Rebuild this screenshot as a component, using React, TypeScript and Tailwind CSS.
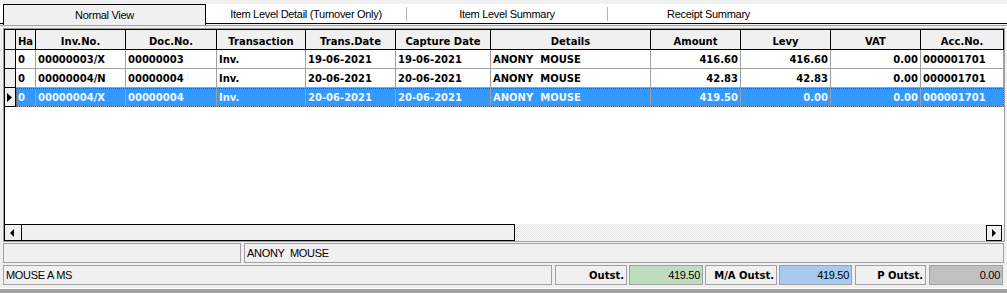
import React from 'react';

type Col = { label: string; w: string; right?: boolean };

const columns: Col[] = [
  { label: 'Ha', w: 'w-[20px]' },
  { label: 'Inv.No.', w: 'w-[90px]' },
  { label: 'Doc.No.', w: 'w-[91px]' },
  { label: 'Transaction', w: 'w-[89px]' },
  { label: 'Trans.Date', w: 'w-[90px]' },
  { label: 'Capture Date', w: 'w-[95px]' },
  { label: 'Details', w: 'w-[160px]' },
  { label: 'Amount', w: 'w-[90px]', right: true },
  { label: 'Levy', w: 'w-[90px]', right: true },
  { label: 'VAT', w: 'w-[90px]', right: true },
  { label: 'Acc.No.', w: 'w-[83px]' },
];

const rows: string[][] = [
  ['0', '00000003/X', '00000003', 'Inv.', '19-06-2021', '19-06-2021', 'ANONY  MOUSE', '416.60', '416.60', '0.00', '000001701'],
  ['0', '00000004/N', '00000004', 'Inv.', '20-06-2021', '20-06-2021', 'ANONY  MOUSE', '42.83', '42.83', '0.00', '000001701'],
  ['0', '00000004/X', '00000004', 'Inv.', '20-06-2021', '20-06-2021', 'ANONY  MOUSE', '419.50', '0.00', '0.00', '000001701'],
];

const Tab: React.FC<{ label: string; sep?: boolean }> = ({ label, sep }) => (
  <div className="w-[201px] flex items-center">
    <div className="flex-1 text-center pt-[2px]">{label}</div>
    {sep && <div className="w-px h-[14px] bg-[#b4b4b4]" />}
  </div>
);

const Arrow: React.FC<{ dir: 'left' | 'right' }> = ({ dir }) => (
  <svg width="4" height="8" viewBox="0 0 4 8">
    {dir === 'left' ? <polygon points="4,0 4,8 0,4" fill="#000" /> : <polygon points="0,0 0,8 4,4" fill="#000" />}
  </svg>
);

export default function App() {
  return (
    <div className="w-[1007px] h-[293px] bg-[#f0f0f0] flex flex-col overflow-hidden font-['Liberation_Sans',sans-serif] text-[11px] tracking-[-0.3px] text-black">
      {/* tabs */}
      <div className="h-[4px] shrink-0" />
      <div className="h-[20px] shrink-0 flex bg-white border-b border-black">
        <div className="w-[3px]" />
        <div className="w-[203px] h-[21px] -mb-px border border-b-0 border-black bg-[#f0f0f0] flex items-center justify-center pt-[1px]">
          Normal View
        </div>
        <Tab label="Item Level Detail (Turnover Only)" sep />
        <Tab label="Item Level Summary" sep />
        <Tab label="Receipt Summary" />
      </div>
      <div className="h-px mt-px bg-[#a0a0a0] shrink-0" />
      <div className="h-[2px] shrink-0" />

      {/* grid */}
      <div className="ml-[3px] w-[1002px] h-[214px] shrink-0 border border-[#a0a0a0] flex flex-col">
        <div className="flex-1 border-l border-t border-black bg-white flex flex-col font-['DejaVu_Sans',sans-serif] font-bold text-[10px] tracking-normal">
          <div className="flex h-[20px] bg-[#f0f0f0] border-b border-black">
            <div className="w-[11px] border-r border-black" />
            {columns.map((c) => (
              <div key={c.label} className={`${c.w} border-r border-black text-center pt-[6px] leading-[12px] overflow-hidden whitespace-nowrap`}>
                {c.label}
              </div>
            ))}
          </div>
          {rows.map((r, i) => {
            const sel = i === 2;
            return (
              <div key={i} className="flex h-[19px]">
                <div className="w-[11px] bg-[#f0f0f0] border-r border-b border-black flex items-center pl-[2px]">
                  {sel && <svg width="5" height="9" viewBox="0 0 5 9"><polygon points="0,0 0,9 5,4.5" fill="#000" /></svg>}
                </div>
                <div className={`flex ${sel ? 'bg-[#3399ff] text-[#eef8ff] outline-1 outline-dotted outline-[#5a5a5a] -outline-offset-1' : ''}`}>
                  {r.map((v, j) => (
                    <div
                      key={j}
                      className={`${columns[j].w} border-r border-b border-[#a0a0a0] flex items-center whitespace-pre overflow-hidden ${columns[j].right ? 'justify-end pr-[2px]' : 'pl-[2px]'}`}
                    >
                      {v}
                    </div>
                  ))}
                </div>
              </div>
            );
          })}
          <div className="flex-1" />
          {/* horizontal scrollbar */}
          <div className="flex h-[17px] bg-[#f0f0f0]">
            <div className="w-[17px] border-t border-b border-r border-black flex items-center justify-center pr-[2px]">
              <Arrow dir="left" />
            </div>
            <div className="w-[493px] border-t border-b border-r border-black" />
            <div className="flex-1 bg-[repeating-conic-gradient(#e4e4e4_0%_25%,#ffffff_0%_50%)] bg-[length:2px_2px]" />
            <div className="w-[16px] h-[16px] mt-px border border-black flex items-center justify-center">
              <Arrow dir="right" />
            </div>
            <div className="w-[2px] bg-[repeating-conic-gradient(#e4e4e4_0%_25%,#ffffff_0%_50%)] bg-[length:2px_2px]" />
          </div>
        </div>
      </div>

      {/* status rows */}
      <div className="h-px shrink-0" />
      <div className="flex h-[20px] shrink-0 ml-[3px] gap-[3px]">
        <div className="w-[238px] border border-[#a0a0a0]" />
        <div className="w-[760px] border border-[#a0a0a0] flex items-center pl-[2px] whitespace-pre">ANONY  MOUSE</div>
      </div>
      <div className="h-[2px] shrink-0" />
      <div className="flex h-[20px] shrink-0">
        <div className="ml-[3px] w-[549px] border border-[#a0a0a0] flex items-center pl-[2px]">MOUSE A MS</div>
        <div className="ml-[3px] w-[72px] border border-[#a0a0a0] flex items-center justify-end pr-[2px] font-['DejaVu_Sans',sans-serif] font-bold text-[10px] tracking-normal">Outst.</div>
        <div className="ml-[2px] w-[74px] border border-[#a0a0a0] bg-[#c0dcc0] flex items-center justify-end pr-[2px]">419.50</div>
        <div className="ml-[2px] w-[72px] border border-[#a0a0a0] flex items-center justify-end pr-[2px] font-['DejaVu_Sans',sans-serif] font-bold text-[10px] tracking-normal">M/A Outst.</div>
        <div className="ml-[2px] w-[73px] border border-[#a0a0a0] bg-[#a6caf0] flex items-center justify-end pr-[2px]">419.50</div>
        <div className="ml-[3px] w-[71px] border border-[#a0a0a0] flex items-center justify-end pr-[2px] font-['DejaVu_Sans',sans-serif] font-bold text-[10px] tracking-normal">P Outst.</div>
        <div className="ml-[3px] w-[74px] border border-[#a0a0a0] bg-[#c0c0c0] flex items-center justify-end pr-[2px]">0.00</div>
      </div>
      <div className="h-[3px] shrink-0" />
      <div className="flex-1 border-t border-white bg-[#a0a0a0]" />
    </div>
  );
}
